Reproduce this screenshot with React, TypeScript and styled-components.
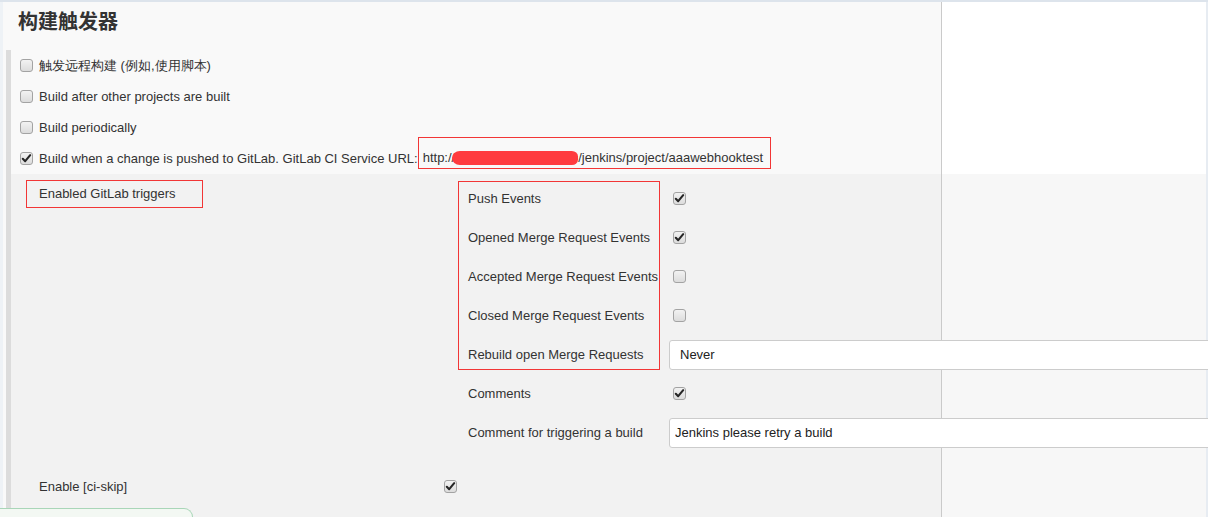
import React from "react";
import styled, { createGlobalStyle } from "styled-components";

const Global = createGlobalStyle`
  html, body { margin: 0; padding: 0; background: #fff; }
  body {
    font-family: "Liberation Sans", Arial, sans-serif;
    font-size: 13px;
    color: #333;
  }
`;

const Page = styled.div`
  position: relative;
  width: 1208px;
  height: 517px;
  overflow: hidden;
  box-sizing: border-box;
  border-top: 2px solid #dde4ec;
  background: linear-gradient(
    to right,
    #eef2f6 0 3px,
    #f9f9f9 3px 941px,
    #cacaca 941px 942px,
    #ffffff 942px 1206px,
    #e7ecf2 1206px
  );
  display: flex;
  flex-direction: column;
`;

const Heading = styled.h2`
  margin: 0;
  height: 48px;
  flex: none;
  padding-left: 18px;
  box-sizing: border-box;
  font-family: "Noto Sans CJK SC", "Noto Sans", sans-serif;
  font-weight: 700;
  font-size: 20px;
  line-height: 38px;
  color: #333;
`;

const Body = styled.div`
  flex: 1;
  margin-left: 6px;
  border-left: 5px solid #dcdcdc;
  display: flex;
  flex-direction: column;
`;

const TriggerRow = styled.div`
  display: flex;
  align-items: center;
  height: 31px;
  padding-left: 9px;
  white-space: nowrap;
`;

const RowLabel = styled.span`
  margin-left: 6px;
  line-height: 16px;
`;

const UrlBox = styled.span`
  align-self: flex-start;
  margin-top: -6px;
  height: 32px;
  box-sizing: border-box;
  border: 1px solid #f23636;
  padding: 12px 7px 0 4px;
  line-height: 16px;
`;

const Blot = styled.span`
  display: inline-block;
  width: 126px;
  height: 14px;
  margin-left: -3px;
  vertical-align: -3px;
  background: #ff3b3f;
  border-radius: 9px 7px 7px 9px / 8px 6px 6px 8px;
`;

const Nested = styled.div`
  flex: 1;
  display: grid;
  grid-template-columns: 433px 1fr;
  grid-auto-rows: auto;
  row-gap: 15px;
  align-content: start;
  background: linear-gradient(
    to right,
    #f2f2f2 0 930px,
    #cacaca 930px 931px,
    #f7f7f7 931px 1195px,
    #e7ecf2 1195px
  );
`;

const TriggersTitle = styled.div`
  align-self: start;
  margin: 6px 0 0 15px;
  width: 177px;
  height: 28px;
  box-sizing: border-box;
  border: 1px solid #f23636;
  padding-left: 12px;
  line-height: 26px;
  white-space: nowrap;
`;

const SubTable = styled.div`
  display: grid;
  grid-template-columns: 211px 1fr;
  grid-template-rows: repeat(7, 39px);
  padding-top: 5px;
  margin-left: 14px;
`;

const RedFrame = styled.div`
  grid-column: 1;
  grid-row: 1 / span 5;
  width: 202px;
  margin: 2px 0 4px 0;
  box-sizing: border-box;
  border: 1px solid #f23636;
  pointer-events: none;
`;

const SubLabel = styled.div<{ $row: number }>`
  grid-column: 1;
  grid-row: ${(p) => p.$row};
  display: flex;
  align-items: center;
  padding-left: 10px;
  white-space: nowrap;
`;

const SubControl = styled.div<{ $row: number }>`
  grid-column: 2;
  grid-row: ${(p) => p.$row};
  display: flex;
  align-items: center;
  padding-left: 4px;
`;

const FieldControl = styled(SubControl)`
  padding-left: 0;
`;

const SelectBox = styled.select`
  appearance: none;
  -webkit-appearance: none;
  flex: 1;
  margin-right: -6px;
  height: 30px;
  box-sizing: border-box;
  border: 1px solid #cccccc;
  border-radius: 3px;
  background: #fff;
  padding: 0 0 0 10px;
  font-family: "Liberation Sans", Arial, sans-serif;
  font-size: 13px;
  color: #222;
  outline: none;
`;

const TextBox = styled.input`
  flex: 1;
  margin-right: -6px;
  height: 30px;
  box-sizing: border-box;
  border: 1px solid #cccccc;
  border-radius: 3px;
  background: #fff;
  padding: 0 0 0 5px;
  font-family: "Liberation Sans", Arial, sans-serif;
  font-size: 13px;
  color: #222;
  outline: none;
`;

const SkipLabel = styled.div`
  display: flex;
  align-items: center;
  height: 39px;
  padding-left: 28px;
`;

const SkipControl = styled.div`
  display: flex;
  align-items: center;
  height: 39px;
`;

const BoxWrap = styled.span`
  flex: none;
  display: inline-flex;
  align-items: center;
  justify-content: center;
  width: 13px;
  height: 13px;
  box-sizing: border-box;
  border: 1px solid #a3a3a3;
  border-radius: 3px;
  background: linear-gradient(#f2f2f2, #dcdcdc);
`;

const SaveBar = styled.div`
  position: absolute;
  left: 0;
  bottom: 0;
  width: 193px;
  height: 9px;
  box-sizing: border-box;
  background: #f3f8f3;
  border-top: 1px solid #a9d6b8;
  border-right: 1px solid #a9d6b8;
  border-top-right-radius: 10px;
`;

function Check({ checked }: { checked?: boolean }) {
  return (
    <BoxWrap>
      {checked && (
        <svg width="11" height="11" viewBox="0 0 11 11">
          <path d="M1.8 5.8 L4.2 8.2 L9.2 2.2" fill="none" stroke="#262626" strokeWidth="2.1" strokeLinecap="round" strokeLinejoin="round" />
        </svg>
      )}
    </BoxWrap>
  );
}

export default function App() {
  return (
    <>
      <Global />
      <Page>
        <Heading>构建触发器</Heading>
        <Body>
          <TriggerRow>
            <Check />
            <RowLabel>触发远程构建 (例如,使用脚本)</RowLabel>
          </TriggerRow>
          <TriggerRow>
            <Check />
            <RowLabel>Build after other projects are built</RowLabel>
          </TriggerRow>
          <TriggerRow>
            <Check />
            <RowLabel>Build periodically</RowLabel>
          </TriggerRow>
          <TriggerRow>
            <Check checked />
            <RowLabel>Build when a change is pushed to GitLab. GitLab CI Service URL:</RowLabel>
            <UrlBox>
              http://<Blot />/jenkins/project/aaawebhooktest
            </UrlBox>
          </TriggerRow>
          <Nested>
            <TriggersTitle>Enabled GitLab triggers</TriggersTitle>
            <SubTable>
              <RedFrame />
              <SubLabel $row={1}>Push Events</SubLabel>
              <SubControl $row={1}><Check checked /></SubControl>
              <SubLabel $row={2}>Opened Merge Request Events</SubLabel>
              <SubControl $row={2}><Check checked /></SubControl>
              <SubLabel $row={3}>Accepted Merge Request Events</SubLabel>
              <SubControl $row={3}><Check /></SubControl>
              <SubLabel $row={4}>Closed Merge Request Events</SubLabel>
              <SubControl $row={4}><Check /></SubControl>
              <SubLabel $row={5}>Rebuild open Merge Requests</SubLabel>
              <FieldControl $row={5}>
                <SelectBox defaultValue="never">
                  <option value="never">Never</option>
                  <option value="source">On push to source branch</option>
                  <option value="both">On push to source or target branch</option>
                </SelectBox>
              </FieldControl>
              <SubLabel $row={6}>Comments</SubLabel>
              <SubControl $row={6}><Check checked /></SubControl>
              <SubLabel $row={7}>Comment for triggering a build</SubLabel>
              <FieldControl $row={7}>
                <TextBox readOnly value="Jenkins please retry a build" />
              </FieldControl>
            </SubTable>
            <SkipLabel>Enable [ci-skip]</SkipLabel>
            <SkipControl><Check checked /></SkipControl>
          </Nested>
        </Body>
        <SaveBar />
      </Page>
    </>
  );
}
